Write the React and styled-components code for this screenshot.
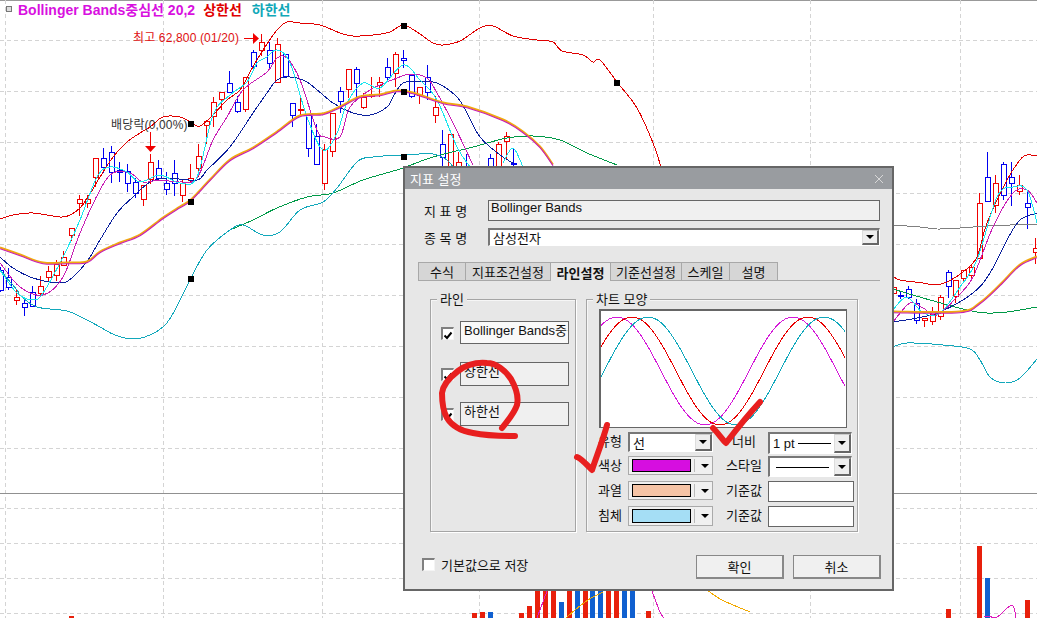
import React from 'react'
import styled, { createGlobalStyle } from 'styled-components'

const GlobalStyle = createGlobalStyle`
  html, body { margin: 0; padding: 0; background: #fff; overflow: hidden; }
  * { box-sizing: border-box; }
  body { font-family: "Liberation Sans", "Noto Sans CJK KR", sans-serif; font-size: 13px; color: #111; }
`

const RED = '#f00000'
const BLUE = '#0000f0'

// x, body top, body bottom, wick high, wick low, colour
const candles = [
  [0,270,290,267,292,BLUE],[8,277,287,268,290,BLUE],[16,297,300,289,305,RED],[24,303,307,298,316,BLUE],
  [32,292,306,286,306,BLUE],[40,286,293,276,297,RED],[48,271,277,266,281,RED],[56,264,275,260,281,RED],
  [63,257,265,251,265,RED],[71,228,235,228,241,RED],[79,199,203,195,216,RED],[87,199,203,195,208,RED],
  [95,158,177,158,187,RED],[103,158,167,148,173,BLUE],[111,152,172,146,183,BLUE],[119,170,172,162,182,BLUE],
  [127,171,183,164,192,BLUE],[135,182,193,178,198,BLUE],[143,185,199,185,206,RED],[150,162,179,154,184,RED],
  [158,168,178,160,180,BLUE],[166,183,189,172,195,BLUE],[174,173,183,160,196,BLUE],[182,183,195,180,202,RED],
  [190,178,180,164,182,RED],[198,156,168,144,177,RED],[206,121,125,121,144,RED],[213,102,116,97,127,RED],
  [221,92,99,92,110,RED],[229,83,92,71,93,BLUE],[237,102,111,96,113,BLUE],[245,77,109,77,112,RED],
  [253,52,66,50,71,BLUE],[261,42,50,34,56,RED],[269,50,63,42,68,BLUE],[277,44,82,38,83,RED],
  [285,54,76,54,77,BLUE],[292,103,115,103,127,BLUE],[300,109,109,97,117,RED],[308,115,148,115,157,BLUE],
  [316,136,164,124,164,BLUE],[324,149,183,144,190,RED],[332,113,151,113,157,RED],[340,91,101,87,113,BLUE],
  [348,69,89,69,98,RED],[356,69,83,67,98,BLUE],[363,97,107,93,109,RED],[371,94,96,77,98,RED],
  [379,82,85,77,97,RED],[387,67,77,58,82,BLUE],[395,54,73,52,87,RED],[403,58,60,50,68,BLUE],
  [411,75,96,74,98,BLUE],[419,87,95,87,104,RED],[427,77,92,65,100,BLUE],[435,107,115,96,123,RED],
  [442,144,157,130,170,BLUE],[450,134,175,134,180,RED],[458,162,175,152,180,RED],[466,170,175,154,180,BLUE],
  [490,158,175,154,180,BLUE],[498,144,175,142,180,RED],[506,136,141,132,160,RED],[513,163,163,148,175,BLUE],
  [893,287,293,285,295,RED],[900,295,295,291,299,BLUE],[908,289,297,286,299,BLUE],[916,303,320,299,324,BLUE],
  [924,318,320,318,327,RED],[932,311,321,307,325,RED],[940,297,316,295,320,RED],[948,272,286,270,298,BLUE],
  [955,280,296,280,303,RED],[963,270,278,270,283,RED],[971,267,275,264,278,RED],[979,203,258,193,258,RED],
  [987,177,201,152,201,BLUE],[995,183,205,175,213,RED],[1003,164,195,162,200,BLUE],[1011,177,183,162,206,BLUE],
  [1019,185,191,175,195,RED],[1027,203,207,190,229,BLUE],[1035,248,252,238,264,RED],
]

const lines = [
  { color: '#e00000', pts: '0,219 13,215 33,213 60,217 70,215 80,208 88,197 100,177 113,157 127,142 140,133 150,127 163,117 180,117 192,123 200,126 213,115 227,100 240,90 250,72 263,50 277,30 287,22 300,23 320,25 340,33 353,36 373,35 390,32 403,25 417,32 433,43 443,45 460,41 480,28 493,26 513,36 537,40 553,42 562,51 583,55 593,62 600,60 617,82 637,108 653,143 661,167' },
  { color: '#e00000', pts: '893,276 900,280 923,283 935,285 947,282 963,272 977,257 987,223 1007,180 1020,160 1027,155 1037,156' },
  { color: '#009a48', pts: '230,230 253,220 277,208 307,197 333,193 363,180 400,169 433,157 473,147 507,138 533,136 560,140 587,153 617,165' },
  { color: '#009a48', pts: '893,289 923,298 967,310 987,313 1007,312 1037,307' },
  { color: '#12a8bb', pts: '0,270 17,290 20,295 37,307 67,311 87,320 100,327 115,335 133,339 150,335 165,325 175,310 190,280 207,250 230,230 243,225 263,235 280,232 300,210 323,202 337,188 357,162 373,157 403,155 433,154 447,160 453,167' },
  { color: '#12a8bb', pts: '893,347 907,343 943,345 970,349 980,360 990,377 1005,383 1020,378 1037,359' },
  { color: '#808080', pts: '893,225 920,227 937,229 960,228 987,226 1037,224' },
  { color: '#0a1f9c', pts: '0,257 13,268 33,278 60,283 73,277 88,260 100,240 117,213 133,197 150,182 167,178 197,180 207,170 230,147 253,113 267,93 277,80 290,77 307,82 333,103 353,113 370,115 387,107 393,97 403,83 420,82 437,83 457,97 467,113 480,137 500,155 513,163' },
  { color: '#0a1f9c', pts: '893,322 917,318 940,312 973,293 990,273 1007,240 1020,220 1037,213' },
  { color: '#c81eb4', pts: '0,263 20,287 43,295 63,277 80,233 100,190 113,173 130,173 143,182 160,180 180,182 197,178 213,140 227,117 243,90 267,72 277,58 287,58 300,80 317,130 325,137 340,137 350,107 370,90 380,85 397,78 410,74 427,78 437,93 453,123 473,165' },
  { color: '#c81eb4', pts: '893,322 910,303 923,308 937,315 957,297 973,277 993,227 1013,193 1027,190 1037,203' },
  { color: '#19e6ee', pts: '0,270 17,293 33,300 43,293 63,257 80,220 97,177 110,167 127,172 140,182 160,175 180,183 197,177 213,115 230,95 247,82 257,63 267,57 277,50 290,63 307,117 323,150 337,133 347,103 363,83 380,88 403,65 420,80 437,100 457,147 470,167' },
  { color: '#19e6ee', pts: '503,163 513,148 523,167' },
  { color: '#19e6ee', pts: '893,310 907,297 923,313 940,313 960,287 977,260 997,197 1013,187 1027,190 1037,223' },
  { color: '#f2a900', pts: '566,618 575,610 588,600 603,592' },
  { color: '#f2a900', pts: '707,590 722,600 750,612' },
  { color: '#dd1bbd', pts: '537,618 547,591' },
  { color: '#dd1bbd', pts: '652,591 660,612 664,618' },
  { color: '#dd1bbd', pts: '984,617 988,616 997,617 1012,605 1016,618' },
]

const midBand = [
  '0,248 20,255 43,263 67,263 87,262 100,252 120,243 140,235 163,218 180,207 191,200 210,180 230,160 253,148 277,132 300,116 323,114 340,107 360,97 380,95 397,91 413,93 443,103 467,107 503,120 523,132 540,147 553,165',
  '893,312 960,312 980,303 1000,285 1020,265 1037,257',
]

const volumes = [
  [69,616,RED],[472,613,RED],[480,612,RED],[488,612,BLUE],[519,613,RED],[527,606,RED],[535,585,RED],[543,585,RED],
  [551,585,RED],[559,602,BLUE],[567,585,RED],[575,585,BLUE],[583,585,RED],[590,585,BLUE],[598,585,BLUE],
  [606,585,RED],[614,585,RED],[622,585,BLUE],[630,585,BLUE],[646,611,RED],[946,609,RED],[977,546,RED],
  [985,578,BLUE],[1025,600,RED],
]

const markers = [[191,202],[191,124],[191,279],[404,26],[404,92],[404,157],[617,83]]
const gridX = [5,163,322,479,653,810,960]
const gridY = [40,91,142,193,244,295,346,397,448,508,543,578,613]

// catmull-rom through the sampled points, so the lines bend like the indicator curves
const smooth = (str) => {
  const p = str.split(' ').map((s) => s.split(',').map(Number))
  let d = `M${p[0][0]} ${p[0][1]}`
  for (let i = 0; i < p.length - 1; i++) {
    const a = p[i - 1] || p[i]
    const b = p[i]
    const c = p[i + 1]
    const e = p[i + 2] || c
    d += `C${b[0] + (c[0] - a[0]) / 6} ${b[1] + (c[1] - a[1]) / 6} ${c[0] - (e[0] - b[0]) / 6} ${c[1] - (e[1] - b[1]) / 6} ${c[0]} ${c[1]}`
  }
  return d
}

const wave = (peak) => {
  const pts = []
  for (let x = 0; x <= 245; x += 2) {
    pts.push(`${x},${60 - 54 * Math.cos((2 * Math.PI * (x + 601 - peak)) / 176)}`)
  }
  return pts.join(' ')
}

const Page = styled.div`
  position: relative;
  width: 1037px;
  height: 618px;
  overflow: hidden;
  background: #fff;
`
const ChartSvg = styled.svg`
  display: block;
`
const ChartLabel = styled.text`
  font-family: "Liberation Sans", "Noto Sans CJK KR", sans-serif;
  font-size: 12px;
  letter-spacing: 0.15px;
`
const Legend = styled.div`
  position: absolute;
  left: 6px;
  top: 1px;
  display: flex;
  align-items: center;
  height: 16px;
  font-weight: 700;
  font-size: 14px;
`
const LegendBox = styled.span`
  width: 6px;
  height: 6px;
  margin-right: 6px;
  background: #ddd;
  border: 1px solid #777;
`
const LegendItem = styled.span`
  color: ${(p) => p.$color};
  margin-right: ${(p) => p.$gap}px;
`

const Dialog = styled.div`
  position: absolute;
  left: 403px;
  top: 166px;
  width: 491px;
  height: 425px;
  background: #e7e7e7;
  border: 2px solid #666;
  display: flex;
  flex-direction: column;
`
const TitleBar = styled.div`
  height: 21px;
  flex: none;
  background: #999ca0;
  color: #fff;
  display: flex;
  align-items: center;
  justify-content: space-between;
  padding: 0 8px 0 5px;
`
const Body = styled.div`
  padding: 11px 0 0 0;
  display: flex;
  flex-direction: column;
`
const InfoRow = styled.div`
  display: flex;
  align-items: center;
  height: ${(p) => p.$h}px;
  margin-bottom: ${(p) => p.$mb}px;
  padding-left: 19px;
`
const InfoLabel = styled.div`
  width: 64px;
  flex: none;
`
const NameField = styled.div`
  width: 392px;
  height: 100%;
  background: #f0f0f0;
  border: 1px solid #666;
  padding: 0 2px;
  line-height: 14px;
`
const ComboField = styled.div`
  position: relative;
  width: ${(p) => p.$w || 392}px;
  height: ${(p) => p.$h || 18}px;
  background: #fff;
  border-top: 2px solid #777;
  border-left: 2px solid #777;
  border-right: 1px solid #fff;
  border-bottom: 1px solid #fff;
  display: flex;
  align-items: center;
  justify-content: space-between;
  padding-left: ${(p) => p.$pad || 3}px;
`
const ArrowButton = styled.div`
  flex: none;
  width: 17px;
  height: 100%;
  background: #eee;
  border-right: 2px solid #666;
  border-bottom: 2px solid #666;
  border-top: 1px solid #ccc;
  border-left: 1px solid #ddd;
  display: flex;
  align-items: center;
  justify-content: center;
`
const Arrow = styled.span`
  width: 0;
  height: 0;
  border-left: 4px solid transparent;
  border-right: 4px solid transparent;
  border-top: 4px solid #000;
`
const TabStrip = styled.div`
  display: flex;
  margin-left: 13px;
  width: 462px;
  height: 19px;
  border-bottom: 1px solid #a8a8a8;
`
const Tab = styled.div`
  width: ${(p) => p.$w}px;
  height: ${(p) => (p.$active ? 19 : 18)}px;
  display: flex;
  align-items: center;
  justify-content: center;
  font-weight: ${(p) => (p.$active ? 700 : 400)};
  background: ${(p) => (p.$active ? '#e7e7e7' : '#d6d6d6')};
  border: 1px solid #a8a8a8;
  border-left: ${(p) => (p.$first ? '1px solid #a8a8a8' : 'none')};
  border-bottom: none;
  z-index: ${(p) => (p.$active ? 1 : 0)};
`
const Panels = styled.div`
  display: flex;
  gap: 10px;
  margin: 18px 0 0 25px;
  height: 233px;
`
const Group = styled.div`
  position: relative;
  width: ${(p) => p.$w}px;
  height: 100%;
  border: 1px solid #a5a5a5;
  box-shadow: 1px 1px 0 #fff, inset 1px 1px 0 #f6f6f6;
  padding: ${(p) => p.$pad};
`
const GroupTitle = styled.div`
  position: absolute;
  left: 6px;
  top: -8px;
  padding: 0 3px;
  background: #e7e7e7;
  line-height: 15px;
`
const LineGrid = styled.div`
  display: grid;
  grid-template-rows: 41px 40px 24px;
`
const LineRow = styled.div`
  display: flex;
  align-items: flex-start;
  gap: 6px;
`
const CheckBox = styled.div`
  flex: none;
  width: 13px;
  height: 13px;
  margin-top: ${(p) => p.$mt || 0}px;
  background: #fff;
  border-top: 2px solid #808080;
  border-left: 2px solid #808080;
  border-right: 1px solid #f4f4f4;
  border-bottom: 1px solid #f4f4f4;
`
const LineField = styled.div`
  width: 109px;
  height: ${(p) => p.$h || 24}px;
  padding-left: 3px;
  background: ${(p) => (p.$light ? '#f9f9f9' : '#f0f0f0')};
  border: 1px solid #666;
  line-height: 18px;
  white-space: nowrap;
  overflow: hidden;
`
const Preview = styled.div`
  width: 248px;
  height: 119px;
  background: #fff;
  border: 2px solid #666;
  border-right-width: 1px;
  border-bottom-width: 1px;
  overflow: hidden;
`
const ControlGrid = styled.div`
  display: grid;
  grid-template-columns: 30px 85px 55px 86px;
  grid-template-rows: 24px 25px 25px 21px;
  margin-top: 4px;
  margin-left: -1px;
`
const RowLabel = styled.div`
  line-height: 20px;
`
const SideLabel = styled.div`
  padding-left: 13px;
  width: 49px;
  text-align: center;
  line-height: 20px;
  white-space: nowrap;
`
const ColorCombo = styled.div`
  width: 85px;
  height: ${(p) => p.$h || 19}px;
  background: #f0f0f0;
  border: 1px solid #aaa;
  padding: 2px 0 2px 3px;
  display: flex;
  align-items: center;
`
const Swatch = styled.div`
  width: 59px;
  height: 100%;
  background: ${(p) => p.$color};
  border: 1px solid #000;
`
const SwatchDivider = styled.div`
  width: 1px;
  height: 100%;
  margin: 0 6px 0 3px;
  background: #bbb;
`
const PlainInput = styled.div`
  width: 86px;
  height: 21px;
  background: #fff;
  border: 1px solid #666;
`
const SolidLine = styled.span`
  display: block;
  flex: none;
  width: ${(p) => p.$w}px;
  height: 1px;
  background: #000;
`
const ComboContent = styled.div`
  display: flex;
  align-items: center;
  gap: 3px;
`
const Footer = styled.div`
  display: flex;
  align-items: center;
  justify-content: space-between;
  width: 459px;
  height: 24px;
  margin: 23px 0 0 17px;
`
const SaveOption = styled.div`
  display: flex;
  align-items: center;
  gap: 6px;
  margin-top: -5px;
`
const ButtonRow = styled.div`
  display: flex;
  gap: 9px;
`
const Button = styled.button`
  width: 88px;
  height: 24px;
  padding: 0;
  background: #f0f0f0;
  border: 1px solid #888;
  border-right-width: 2px;
  border-bottom-width: 2px;
  font: inherit;
  color: #111;
`
const InkLayer = styled.svg`
  position: absolute;
  left: 0;
  top: 0;
  pointer-events: none;
`

const Candle = ({ c }) => {
  const [x, top, bot, hi, lo, color] = c
  const px = x + 0.5
  return (
    <g stroke={color} shapeRendering="crispEdges">
      <line x1={px} x2={px} y1={hi} y2={lo} />
      <rect x={px - 2.5} y={top + 0.5} width={5} height={Math.max(bot - top, 1)} fill="#fff" />
    </g>
  )
}

const Chart = () => (
  <ChartSvg width="1037" height="618" viewBox="0 0 1037 618">
    <line x1="0" x2="1037" y1="0.5" y2="0.5" stroke="#999" />
    {gridX.map((x) => (
      <line key={x} x1={x + 0.5} x2={x + 0.5} y1="0" y2="618" stroke="#d4d4d4" strokeDasharray="4 3" />
    ))}
    {gridY.map((y) => (
      <line key={y} x1="0" x2="1037" y1={y + 0.5} y2={y + 0.5} stroke="#d4d4d4" strokeDasharray="4 3" />
    ))}
    <line x1="0" x2="1037" y1="493.5" y2="493.5" stroke="#909090" />
    {volumes.map(([x, y, color]) => (
      <rect key={x} x={x} y={y} width="5" height={618 - y} fill={color === RED ? '#e8200c' : '#1060d0'} />
    ))}
    {candles.map((c) => (
      <Candle key={c[0]} c={c} />
    ))}
    {lines.map((l, i) => (
      <path key={i} d={smooth(l.pts)} fill="none" stroke={l.color} strokeWidth="1" shapeRendering="crispEdges" />
    ))}
    {midBand.map((pts) => (
      <g key={pts} fill="none">
        <path d={smooth(pts)} stroke="#f0a810" strokeWidth="2" transform="translate(0 -0.5)" />
        <path d={smooth(pts)} stroke="#c81eb4" strokeWidth="1.1" transform="translate(0 0.7)" />
      </g>
    ))}
    {markers.map(([x, y]) => (
      <rect key={`${x}-${y}`} x={x - 3} y={y - 3} width="6" height="6" fill="#000" />
    ))}
    <ChartLabel x="133" y="42" fill="#e01010">최고 62,800 (01/20)</ChartLabel>
    <path d="M244 38.5H253" stroke="#f00000" />
    <path d="M253 33L259 38.5L253 44Z" fill="#f00000" />
    <ChartLabel x="111" y="129" fill="#333">배당락(0,00%)</ChartLabel>
    <path d="M150.5 132V146" stroke="#f00000" />
    <path d="M145 146H156L150.5 152Z" fill="#f00000" />
  </ChartSvg>
)

const Check = () => (
  <svg width="10" height="10" viewBox="0 0 10 10">
    <path d="M1.5 4.5L4 7L8.5 1.5" fill="none" stroke="#000" strokeWidth="2" />
  </svg>
)

const tabs = [
  ['수식', 48], ['지표조건설정', 85], ['라인설정', 60], ['기준선설정', 71], ['스케일', 48], ['설명', 48],
]

const colorRows = [
  ['색상', '#d60ee0', 19, '스타일'],
  ['과열', '#f5c3a5', 19, '기준값'],
  ['침체', '#a5def5', 20, '기준값'],
]

const App = () => (
  <Page>
    <GlobalStyle />
    <Chart />
    <Legend>
      <LegendBox />
      <LegendItem $color="#d810e0" $gap={8}>Bollinger Bands중심선 20,2</LegendItem>
      <LegendItem $color="#e00000" $gap={10}>상한선</LegendItem>
      <LegendItem $color="#10a8b8">하한선</LegendItem>
    </Legend>

    <Dialog>
      <TitleBar>
        <span>지표 설정</span>
        <svg width="10" height="10" viewBox="0 0 10 10">
          <path d="M1 1L9 9M9 1L1 9" stroke="#d8d8d8" strokeWidth="1" />
        </svg>
      </TitleBar>
      <Body>
        <InfoRow $h={21} $mb={7}>
          <InfoLabel>지 표 명</InfoLabel>
          <NameField>Bollinger Bands</NameField>
        </InfoRow>
        <InfoRow $h={18} $mb={16}>
          <InfoLabel>종 목 명</InfoLabel>
          <ComboField>
            삼성전자
            <ArrowButton><Arrow /></ArrowButton>
          </ComboField>
        </InfoRow>
        <TabStrip>
          {tabs.map(([name, w], i) => (
            <Tab key={name} $w={w} $first={i === 0} $active={name === '라인설정'}>{name}</Tab>
          ))}
        </TabStrip>
        <Panels>
          <Group $w={146} $pad="21px 0 0 10px">
            <GroupTitle>라인</GroupTitle>
            <LineGrid>
              <LineRow>
                <CheckBox $mt={6}><Check /></CheckBox>
                <LineField $light $h={23}>Bollinger Bands중심선</LineField>
              </LineRow>
              <LineRow>
                <CheckBox $mt={6}><Check /></CheckBox>
                <LineField>상한선</LineField>
              </LineRow>
              <LineRow>
                <CheckBox $mt={6}><Check /></CheckBox>
                <LineField>하한선</LineField>
              </LineRow>
            </LineGrid>
          </Group>
          <Group $w={272} $pad="9px 0 0 12px">
            <GroupTitle>차트 모양</GroupTitle>
            <Preview>
              <svg width="245" height="116" viewBox="0 0 245 116" style={{ display: 'block' }}>
                <polyline points={wave(617)} fill="none" stroke="#d418d8" shapeRendering="crispEdges" />
                <polyline points={wave(632)} fill="none" stroke="#e80000" shapeRendering="crispEdges" />
                <polyline points={wave(648)} fill="none" stroke="#10a8bc" shapeRendering="crispEdges" />
              </svg>
            </Preview>
            <ControlGrid>
              <RowLabel>유형</RowLabel>
              <ComboField $w={85} $h={20}>
                선
                <ArrowButton><Arrow /></ArrowButton>
              </ComboField>
              <SideLabel>너비</SideLabel>
              <ComboField $w={84} $h={22}>
                <ComboContent>
                  1 pt
                  <SolidLine $w={33} />
                </ComboContent>
                <ArrowButton><Arrow /></ArrowButton>
              </ComboField>
              {colorRows.map(([label, color, h, side], i) => (
                <React.Fragment key={label}>
                  <RowLabel>{label}</RowLabel>
                  <ColorCombo $h={h}>
                    <Swatch $color={color} />
                    <SwatchDivider />
                    <Arrow />
                  </ColorCombo>
                  <SideLabel>{side}</SideLabel>
                  {i === 0 ? (
                    <ComboField $w={84} $h={21} $pad={6}>
                      <SolidLine $w={53} />
                      <ArrowButton><Arrow /></ArrowButton>
                    </ComboField>
                  ) : (
                    <PlainInput />
                  )}
                </React.Fragment>
              ))}
            </ControlGrid>
          </Group>
        </Panels>
        <Footer>
          <SaveOption>
            <CheckBox />
            <span>기본값으로 저장</span>
          </SaveOption>
          <ButtonRow>
            <Button>확인</Button>
            <Button>취소</Button>
          </ButtonRow>
        </Footer>
      </Body>
    </Dialog>

    <InkLayer width="1037" height="618" viewBox="0 0 1037 618">
      <g fill="none" stroke="#e81f1f" strokeWidth="6" strokeLinecap="round" strokeLinejoin="round">
        <path d="M502 428C508 420 514 414 517 405C519 396 515 386 511 379C505 370 496 363 487 363C476 362 466 365 458 371C449 378 443 385 442 393C442 402 443 411 447 418C452 426 460 431 473 433C488 436 502 436 515 436" />
        <path d="M577 457C582 459 587 465 592 470C597 455 603 440 607 425" />
        <path d="M713 428C718 433 722 439 726 443C736 430 748 415 760 402" />
      </g>
    </InkLayer>
  </Page>
)

export default App
